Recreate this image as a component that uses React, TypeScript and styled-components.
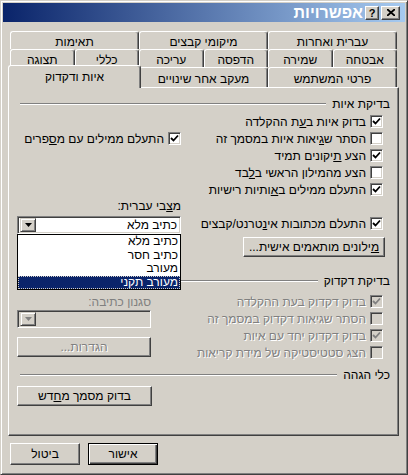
import React from "react";
import styled, { createGlobalStyle, css } from "styled-components";

const FONT = `"Liberation Sans", Arial, "DejaVu Sans", sans-serif`;

const Global = createGlobalStyle`
  html, body { margin: 0; padding: 0; background: #d4d0c8; }
  body { font-family: ${FONT}; }
  * { box-sizing: border-box; }
`;

const Window = styled.div`
  width: 408px;
  height: 475px;
  background: #d4d0c8;
  border: 1px solid;
  border-color: #d4d0c8 #404040 #404040 #d4d0c8;
  box-shadow: inset 1px 1px #fff, inset -1px -1px #808080;
  padding: 2px;
  direction: rtl;
  display: flex;
  flex-direction: column;
  font-family: ${FONT};
  font-size: 12px;
  color: #000;
  overflow: hidden;
`;

const TitleBar = styled.div`
  height: 19px;
  flex: none;
  background: linear-gradient(to right, #0a246a, #a6caf0);
  display: flex;
  align-items: center;
  gap: 2px;
  padding-right: 5px;
`;

const CaptionButton = styled.div<{ $w: number }>`
  width: ${(p) => p.$w}px;
  height: 14px;
  flex: none;
  background: #d4d0c8;
  border: 1px solid;
  border-color: #fff #404040 #404040 #fff;
  box-shadow: inset -1px -1px #808080;
  display: flex;
  align-items: center;
  justify-content: center;
  font: bold 11px ${FONT};
  color: #000;
`;

const TitleText = styled.div`
  color: #fff;
  font: bold 16px ${FONT};
  white-space: nowrap;
`;

const Body = styled.div`
  flex: 1;
  display: flex;
  flex-direction: column;
  padding: 0 6px 0 5px;
`;

const TabStack = styled.div`
  margin: 9px 2px 0 2px;
  display: flex;
  flex-direction: column;
`;

const TabRow = styled.div<{ $n: number; $h: number }>`
  display: grid;
  grid-template-columns: repeat(${(p) => p.$n}, 1fr);
  height: ${(p) => p.$h}px;
`;

const Tab = styled.div<{ $active?: boolean }>`
  position: relative;
  display: flex;
  align-items: center;
  justify-content: center;
  padding-top: 2px;
  background: #d4d0c8;
  border-top: 1px solid #fff;
  border-left: 1px solid #fff;
  border-right: 1px solid #404040;
  box-shadow: inset -1px 0 #808080;
  border-radius: 3px 3px 0 0;
  white-space: nowrap;
  ${(p) =>
    p.$active &&
    css`
      margin: -2px -2px -1px -2px;
      z-index: 2;
      padding-top: 0;
    `}
`;

const Panel = styled.div`
  position: relative;
  flex: 1;
  border: 1px solid;
  border-color: #fff #404040 #404040 #fff;
  box-shadow: inset -1px -1px #808080;
  padding: 9px 8px 0 8px;
  display: flex;
  flex-direction: column;
`;

const SectionHeader = styled.div<{ $mt?: number }>`
  display: flex;
  align-items: center;
  gap: 6px;
  height: 14px;
  margin-top: ${(p) => p.$mt ?? 0}px;
  padding-left: 3px;
  white-space: nowrap;
`;

const HeaderLine = styled.div`
  flex: 1;
  height: 2px;
  border-top: 1px solid #808080;
  border-bottom: 1px solid #fff;
`;

const TwoCol = styled.div<{ $left: number; $mt?: number }>`
  display: grid;
  grid-template-columns: 1fr ${(p) => p.$left}px;
  column-gap: 8px;
  padding-right: 7px;
  margin-top: ${(p) => p.$mt ?? 0}px;
`;

const Column = styled.div<{ $pt?: number }>`
  display: flex;
  flex-direction: column;
  align-items: stretch;
  padding-top: ${(p) => p.$pt ?? 0}px;
  min-width: 0;
`;

const CheckRow = styled.div<{ $disabled?: boolean }>`
  display: flex;
  align-items: center;
  gap: 4px;
  height: 17px;
  white-space: nowrap;
  color: ${(p) => (p.$disabled ? "#808080" : "#000")};
  text-shadow: ${(p) => (p.$disabled ? "1px 1px 0 #fff" : "none")};
`;

const Box = styled.span<{ $disabled?: boolean }>`
  width: 13px;
  height: 13px;
  flex: none;
  border: 1px solid;
  border-color: #808080 #fff #fff #808080;
  box-shadow: inset 1px 1px #404040, inset -1px -1px #d4d0c8;
  background: ${(p) => (p.$disabled ? "#d4d0c8" : "#fff")};
  display: flex;
  align-items: center;
  justify-content: center;
`;

const Label = styled.div<{ $disabled?: boolean }>`
  height: 14px;
  line-height: 14px;
  white-space: nowrap;
  color: ${(p) => (p.$disabled ? "#808080" : "#000")};
`;

const Button = styled.div<{
  $w: number;
  $h: number;
  $mt?: number;
  $mr?: number;
  $disabled?: boolean;
  $default?: boolean;
  $alignRight?: boolean;
}>`
  width: ${(p) => p.$w}px;
  height: ${(p) => p.$h}px;
  margin-top: ${(p) => p.$mt ?? 0}px;
  margin-right: ${(p) => p.$mr ?? 0}px;
  align-self: ${(p) => (p.$alignRight ? "flex-start" : "auto")};
  flex: none;
  display: flex;
  align-items: center;
  justify-content: center;
  white-space: nowrap;
  background: #d4d0c8;
  border: 1px solid;
  border-color: #fff #404040 #404040 #fff;
  box-shadow: inset -1px -1px #808080;
  color: ${(p) => (p.$disabled ? "#808080" : "#000")};
  text-shadow: ${(p) => (p.$disabled ? "1px 1px 0 #fff" : "none")};
  ${(p) =>
    p.$default &&
    css`
      border: 1px solid #000;
      box-shadow: inset 1px 1px #fff, inset -1px -1px #404040,
        inset -2px -2px #808080;
    `}
`;

const SelectWrap = styled.div<{ $mt?: number }>`
  position: relative;
  margin-top: ${(p) => p.$mt ?? 0}px;
`;

const SelectBox = styled.div<{ $disabled?: boolean }>`
  height: 18px;
  border: 1px solid;
  border-color: #808080 #fff #fff #808080;
  box-shadow: inset 1px 1px #404040, inset -1px -1px #d4d0c8;
  background: ${(p) => (p.$disabled ? "#d4d0c8" : "#fff")};
  display: flex;
  align-items: center;
  padding: 1px;
`;

const SelectValue = styled.div`
  flex: 1;
  padding-right: 2px;
  white-space: nowrap;
`;

const ArrowBtn = styled.div`
  width: 16px;
  height: 14px;
  margin: 1px;
  background: #d4d0c8;
  border: 1px solid;
  border-color: #d4d0c8 #404040 #404040 #d4d0c8;
  box-shadow: inset 1px 1px #fff, inset -1px -1px #808080;
  display: flex;
  align-items: center;
  justify-content: center;
`;

const DropList = styled.div`
  position: absolute;
  top: 100%;
  left: 0;
  right: 0;
  z-index: 5;
  background: #fff;
  border: 1px solid #000;
`;

const DropItem = styled.div<{ $sel?: boolean }>`
  height: 13.5px;
  line-height: 13.5px;
  padding-right: 2px;
  white-space: nowrap;
  ${(p) =>
    p.$sel &&
    css`
      background: #0a246a;
      color: #fff;
      outline: 1px dotted #d4d0c8;
      outline-offset: -1px;
    `}
`;

const Footer = styled.div`
  flex: none;
  display: flex;
  justify-content: flex-end;
  gap: 8px;
  padding: 7px 0 7px 7px;
`;

const Check = ({ color = "#000" }: { color?: string }) => (
  <svg width="9" height="9" viewBox="0 0 9 9">
    <polyline
      points="1,4 3.5,6.5 8,1.5"
      fill="none"
      stroke={color}
      strokeWidth="1.8"
    />
  </svg>
);

const Arrow = ({ color = "#000" }: { color?: string }) => (
  <svg width="7" height="4" viewBox="0 0 7 4">
    <polygon points="0,0 7,0 3.5,4" fill={color} />
  </svg>
);

const CheckItem = ({
  checked,
  disabled,
  children,
}: {
  checked?: boolean;
  disabled?: boolean;
  children: React.ReactNode;
}) => (
  <CheckRow $disabled={disabled}>
    <Box $disabled={disabled}>
      {checked && <Check color={disabled ? "#808080" : "#000"} />}
    </Box>
    <span>{children}</span>
  </CheckRow>
);

export default function App() {
  return (
    <>
      <Global />
      <Window>
        <TitleBar>
          <CaptionButton $w={19}>
            <svg width="8" height="7" viewBox="0 0 8 7">
              <path d="M0 0 L8 7 M8 0 L0 7" stroke="#000" strokeWidth="1.8" />
            </svg>
          </CaptionButton>
          <CaptionButton $w={14}>?</CaptionButton>
          <TitleText>אפשרויות</TitleText>
        </TitleBar>
        <Body>
          <TabStack>
            <TabRow $n={3} $h={18}>
              <Tab>עברית ואחרות</Tab>
              <Tab>מיקומי קבצים</Tab>
              <Tab>תאימות</Tab>
            </TabRow>
            <TabRow $n={6} $h={18}>
              <Tab>אבטחה</Tab>
              <Tab>שמירה</Tab>
              <Tab>הדפסה</Tab>
              <Tab>עריכה</Tab>
              <Tab>כללי</Tab>
              <Tab>תצוגה</Tab>
            </TabRow>
            <TabRow $n={3} $h={20}>
              <Tab>פרטי המשתמש</Tab>
              <Tab>מעקב אחר שינויים</Tab>
              <Tab $active>איות ודקדוק</Tab>
            </TabRow>
          </TabStack>
          <Panel>
            <SectionHeader>
              <span>בדיקת איות</span>
              <HeaderLine />
            </SectionHeader>
            <TwoCol $left={164} $mt={2}>
              <Column>
                <CheckItem checked>
                  בדוק איות ב<u>ע</u>ת ההקלדה
                </CheckItem>
                <CheckItem>
                  הסתר ש<u>ג</u>יאות איות במסמך זה
                </CheckItem>
                <CheckItem checked>
                  הצע <u>ת</u>יקונים תמיד
                </CheckItem>
                <CheckItem>
                  הצע מהמילון הראשי ב<u>ל</u>בד
                </CheckItem>
                <CheckItem checked>
                  התעלם ממילים ב<u>א</u>ותיות רישיות
                </CheckItem>
              </Column>
              <Column $pt={17}>
                <CheckItem checked>
                  התעלם ממילים עם מ<u>ס</u>פרים
                </CheckItem>
              </Column>
            </TwoCol>
            <TwoCol $left={164} $mt={1}>
              <Column $pt={16}>
                <CheckItem checked>
                  התעלם מכתובות אי<u>נ</u>טרנט/קבצים
                </CheckItem>
                <Button $w={142} $h={20} $mt={5} $mr={-2} $alignRight>
                  <span>
                    <u>מ</u>ילונים מותאמים אישית...
                  </span>
                </Button>
              </Column>
              <Column>
                <Label>
                  מ<u>צ</u>בי עברית:
                </Label>
                <SelectWrap $mt={3}>
                  <SelectBox>
                    <SelectValue>כתיב מלא</SelectValue>
                    <ArrowBtn>
                      <Arrow />
                    </ArrowBtn>
                  </SelectBox>
                  <DropList>
                    <DropItem>כתיב מלא</DropItem>
                    <DropItem>כתיב חסר</DropItem>
                    <DropItem>מעורב</DropItem>
                    <DropItem $sel>מעורב תקני</DropItem>
                  </DropList>
                </SelectWrap>
              </Column>
            </TwoCol>
            <SectionHeader $mt={17}>
              <span>בדיקת דקדוק</span>
              <HeaderLine />
            </SectionHeader>
            <TwoCol $left={134} $mt={5}>
              <Column>
                <CheckItem checked disabled>
                  בדוק דקדוק בעת ההקלדה
                </CheckItem>
                <CheckItem disabled>הסתר שגיאות דקדוק במסמך זה</CheckItem>
                <CheckItem checked disabled>
                  בדוק דקדוק יחד עם איות
                </CheckItem>
                <CheckItem disabled>הצג סטטיסטיקה של מידת קריאות</CheckItem>
              </Column>
              <Column $pt={2}>
                <Label $disabled>סגנון כתיבה:</Label>
                <SelectWrap $mt={1}>
                  <SelectBox $disabled>
                    <SelectValue />
                    <ArrowBtn>
                      <Arrow color="#808080" />
                    </ArrowBtn>
                  </SelectBox>
                </SelectWrap>
                <Button $w={134} $h={20} $mt={9} $disabled>
                  הגדרות...
                </Button>
              </Column>
            </TwoCol>
            <SectionHeader $mt={7}>
              <span>כלי הגהה</span>
              <HeaderLine />
            </SectionHeader>
            <TwoCol $left={135} $mt={4}>
              <Column />
              <Column>
                <Button $w={135} $h={20}>
                  <span>
                    בדוק מסמך מ<u>ח</u>דש
                  </span>
                </Button>
              </Column>
            </TwoCol>
          </Panel>
        </Body>
        <Footer>
          <Button $w={70} $h={22} $default>
            אישור
          </Button>
          <Button $w={70} $h={22}>
            ביטול
          </Button>
        </Footer>
      </Window>
    </>
  );
}
